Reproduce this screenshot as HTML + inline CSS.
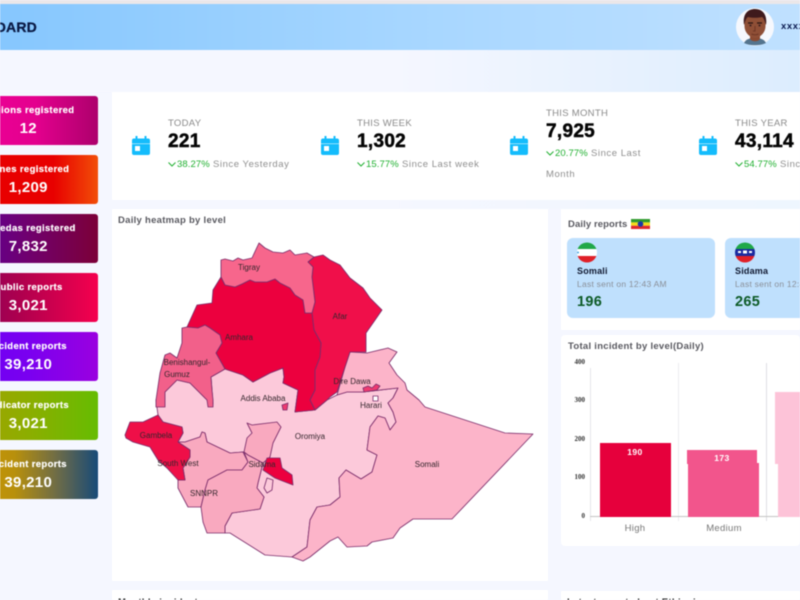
<!DOCTYPE html>
<html><head><meta charset="utf-8"><style>
html,body{margin:0;padding:0;width:800px;height:600px;overflow:hidden;background:#f5f7ff}
#r{position:absolute;left:0;top:0;width:800px;height:600px;overflow:hidden;font-family:"Liberation Sans",sans-serif;filter:blur(.45px)}
.a{position:absolute;white-space:nowrap}
.s{position:absolute;left:-41px;width:138.5px;height:49px;border-radius:3px;color:#fff;text-align:center}
.s b{position:absolute;left:0;right:0;top:9px;font-size:9.5px;line-height:12px;letter-spacing:.35px;-webkit-text-stroke:.2px #fff}
.s i{position:absolute;left:0;right:0;top:24px;font-style:normal;font-weight:bold;font-size:15px;line-height:18px;letter-spacing:.3px}
.l{font-size:9.5px;color:#8a8a8a;letter-spacing:.3px;line-height:12px}
.v{font-size:19px;font-weight:bold;color:#050505;line-height:22px;letter-spacing:.3px;-webkit-text-stroke:.5px #050505}
.c{font-size:9.5px;line-height:12px;color:#8f8f8f;letter-spacing:.55px}
.c em{font-style:normal;color:#20b030;letter-spacing:.1px}
.c svg{vertical-align:0;margin-right:1px}
.t{font-size:9.5px;font-weight:bold;color:#58585f;letter-spacing:.28px;line-height:12px}
.d{position:absolute;top:238px;height:80px;background:#bfe0fd;border-radius:6px}
.n{font-size:9px;font-weight:bold;color:#101830;line-height:12px;letter-spacing:.2px}
.m{font-size:8.5px;color:#8a8f98;line-height:11px;letter-spacing:.25px}
.q{font-size:14.5px;font-weight:bold;color:#0c5a26;line-height:16px;letter-spacing:.3px}
.y{font-family:"Liberation Serif",serif;font-size:7px;color:#333;font-weight:bold;line-height:8px;text-align:right;width:20px}
.x{font-size:9.5px;color:#777;line-height:12px;letter-spacing:.3px}
svg text{font-family:"Liberation Sans",sans-serif;font-size:8px;fill:#33262c;text-anchor:middle}
</style></head><body><div id="r">
<div class="a" style="left:0;top:50px;width:800px;height:42px;background:linear-gradient(90deg,#f5f7ff 0,#f5f7ff 50%,#dcedfe 100%)"></div>
<div class="a" style="left:400px;top:200px;width:400px;height:9px;background:linear-gradient(90deg,#f5f7ff 0,#eef6fe 100%)"></div>
<div class="a" style="left:0;top:0;width:800px;height:4px;background:#ebe7e9"></div>
<div class="a" style="left:0;top:4px;width:800px;height:46px;background:linear-gradient(90deg,#86c7fe 0,#a6d6ff 50%,#c0e1ff 100%)"></div>
<div class="a" style="right:763px;top:18px;font-size:14px;font-weight:bold;color:#0a1a45;line-height:18px;letter-spacing:.2px;-webkit-text-stroke:.3px #0a1a45">DASHBOARD</div>
<svg class="a" style="left:735px;top:8px" width="40" height="40" viewBox="0 0 40 40">
<circle cx="20" cy="19" r="19" fill="#f6f8fd"/>
<path d="M9 35c2-4 6-5 11-5s9 1 11 5c-6 3-16 3-22 0z" fill="#54748e"/>
<path d="M15 26h10v5c-2 3-8 3-10 0z" fill="#8a4a32"/>
<path d="M9.500 13C9.500 6 13 2 20 2s10.500 4 10.500 11v5c0 7-6 12-10.500 12S9.500 25 9.500 18z" fill="#8f4f36"/>
<path d="M9 17C7.500 7 12 1 20 1s12.500 6 11 16c-1-3-2-7-4-8-5 1-9 1-14 0-2 1-3 5-4 8z" fill="#3f1a1c"/>
<path d="M13 15h5M22 15h5" stroke="#2a1512" stroke-width="1.300"/>
<circle cx="15.500" cy="17.500" r="1" fill="#3a1e20"/><circle cx="24.500" cy="17.500" r="1" fill="#3a1e20"/>
<path d="M20 18v5h-2M16.500 26c2 1 5 1 7 0" stroke="#6d3524" stroke-width="1" fill="none"/>
</svg>
<div class="a" style="left:781px;top:21px;font-size:9.500px;font-weight:bold;color:#0a1a50;line-height:12px;letter-spacing:.6px">xxxx</div>

<div class="s" style="top:96px;background:linear-gradient(90deg,#f0009a 0,#e4008e 55%,#ad006c 100%)"><b>Regions registered</b><i>12</i></div>
<div class="s" style="top:155px;background:linear-gradient(90deg,#e80000 0,#e80000 68%,#f24e08 100%)"><b>Zones registered</b><i>1,209</i></div>
<div class="s" style="top:214px;background:linear-gradient(90deg,#5a00a0 0,#70006e 50%,#7c0038 100%)"><b>Woredas registered</b><i>7,832</i></div>
<div class="s" style="top:273px;background:linear-gradient(90deg,#80005a 0,#b0004e 45%,#f5004e 100%)"><b>Public reports</b><i>3,021</i></div>
<div class="s" style="top:332px;background:linear-gradient(90deg,#6a00f5 0,#7a00f0 50%,#9a00e0 100%)"><b>Incident reports</b><i>39,210</i></div>
<div class="s" style="top:391px;background:linear-gradient(90deg,#a8a000 0,#8cae00 50%,#66bc02 100%)"><b>Indicator reports</b><i>3,021</i></div>
<div class="s" style="top:450px;background:linear-gradient(90deg,#d09a00 0,#b8900c 40%,#6a6a4a 72%,#174a78 100%)"><b>Incident reports</b><i>39,210</i></div>

<div class="a" style="left:112px;top:92px;width:688px;height:108px;background:#fff"></div>
<svg width="0" height="0" style="position:absolute"><defs>
<symbol id="cal" viewBox="0 0 18 20"><path d="M0 5.500a2 2 0 0 1 2-2h1.500V1h2v2.500h7V1h2v2.500H16a2 2 0 0 1 2 2V8.500H0z" fill="#14bcfc"/><path d="M0 9h18v9a2 2 0 0 1-2 2H2a2 2 0 0 1-2-2z" fill="#14bcfc"/><rect x="3" y="11" width="5" height="5" fill="#fff"/></symbol>
<symbol id="ck" viewBox="0 0 8 5"><path d="M.5.500 4 4 7.500.500" stroke="#20b030" stroke-width="1" fill="none"/></symbol>
</defs></svg>
<svg class="a" style="left:132px;top:135px" width="18" height="20"><use href="#cal"/></svg>
<svg class="a" style="left:321px;top:135px" width="18" height="20"><use href="#cal"/></svg>
<svg class="a" style="left:510px;top:135px" width="18" height="20"><use href="#cal"/></svg>
<svg class="a" style="left:699px;top:135px" width="18" height="20"><use href="#cal"/></svg>

<div class="a l" style="left:168px;top:118px">TODAY</div>
<div class="a v" style="left:168px;top:131px">221</div>
<div class="a c" style="left:168px;top:159px"><svg width="8" height="5"><use href="#ck"/></svg><em>38.27%</em> Since Yesterday</div>
<div class="a l" style="left:357px;top:118px">THIS WEEK</div>
<div class="a v" style="left:357px;top:131px">1,302</div>
<div class="a c" style="left:357px;top:159px"><svg width="8" height="5"><use href="#ck"/></svg><em>15.77%</em> Since Last week</div>
<div class="a l" style="left:546px;top:108px">THIS MONTH</div>
<div class="a v" style="left:546px;top:121px">7,925</div>
<div class="a c" style="left:546px;top:148px"><svg width="8" height="5"><use href="#ck"/></svg><em>20.77%</em> Since Last</div>
<div class="a c" style="left:546px;top:169px">Month</div>
<div class="a l" style="left:735px;top:118px">THIS YEAR</div>
<div class="a v" style="left:735px;top:131px">43,114</div>
<div class="a c" style="left:735px;top:159px"><svg width="8" height="5"><use href="#ck"/></svg><em>54.77%</em> Since Last year</div>

<div class="a" style="left:112px;top:209px;width:436px;height:372px;background:#fff"></div>
<div class="a t" style="left:118px;top:215px">Daily heatmap by level</div>
<svg class="a" style="left:0;top:0" width="800" height="600" stroke="#7b2d6b" stroke-width=".85" stroke-linejoin="round">
<!-- Oromiya -->
<path fill="#fcc9da" d="M156 400 165 392 177 380 190 383 200 393 207 400 213 404 211 377 225 369 243 375 253 382 270 373 283 368 284 377 283 383 298 390 295 412 305 411 315 410 327 400 337 395 347 392 363 392 398 388 393 398 388 403 393 412 396 422 390 430 385 418 378 416 370 427 367 450 377 455 372 472 361 479 346 470 339 478 340 497 330 505 317 507 310 520 307 547 292 557 265 555 230 533 225 533 225 526 232 513 260 509 264 497 257 488 258 483 263 463 248 455 244 452 230 453 207 442 205 433 202 432 200 437 185 442 178 442 183 433 182 427 163 422 158 415z"/>
<!-- Somali -->
<path fill="#fcb4c9" d="M350 352 367 353 388 348 397 352 389 363 397 375 405 383 407 390 419 400 425 407 505 433 533 434 452 519 413 519 400 528 393 538 372 542 367 546 347 547 338 537 330 541 310 557 303 561 292 557 307 547 310 520 317 507 330 505 340 497 339 478 346 470 361 479 372 472 377 455 367 450 370 427 378 416 385 418 390 430 396 422 393 412 388 403 393 398 398 388 363 392 347 392 337 395 345 367z"/>
<!-- Afar -->
<path fill="#f00f4a" d="M308 262 314 257 323 255 330 260 340 265 350 278 363 288 370 298 382 310 373 323 366 333 366 352 350 352 345 367 337 392 330 397 327 400 315 410 310 400 315 390 315 370 320 357 321 343 314 330 312 313 315 302 312 277 313 267z"/>
<!-- Amhara -->
<path fill="#ec003e" d="M221 277 225 285 235 287 242 284 250 280 255 282 267 282 275 279 280 283 290 288 295 295 303 300 305 313 312 313 314 330 321 343 320 357 315 370 315 390 310 400 315 410 305 411 295 412 298 390 283 383 284 377 283 368 270 373 253 382 243 375 225 369 216 353 222 343 220 335 210 328 205 325 198 328 187 327 197 305 212 303 213 290z"/>
<!-- Tigray -->
<path fill="#f7668c" d="M221 260 225 259 233 261 238 258 243 260 252 258 259 243 265 248 273 252 283 253 290 250 295 255 307 253 314 257 308 262 313 267 312 277 315 302 312 313 305 313 303 300 295 295 290 288 280 283 275 279 267 282 255 282 250 280 242 284 235 287 225 285 221 277z"/>
<!-- Benishangul -->
<path fill="#f2608a" d="M187 327 198 328 205 325 210 328 220 335 222 343 216 353 225 369 211 377 212 390 213 400 213 407 208 407 207 400 200 393 190 383 177 380 165 392 165 407 156 407 156 400 160 373 165 355 170 353 177 358 182 343 182 328z"/>
<!-- South West -->
<path fill="#f9a9bf" d="M185 442 200 437 202 432 205 433 207 442 230 453 243 452 248 462 242 470 227 470 208 480 205 490 201 507 188 507 178 488 178 480 185 480 183 468 190 457 190 450 178 442z"/>
<!-- SNNPR -->
<path fill="#f9a9bf" d="M227 470 242 470 248 462 244 452 248 455 263 463 258 483 257 488 264 497 260 509 232 513 225 526 225 533 207 533 203 522 201 507 205 490 208 480z"/>
<!-- Sidama -->
<path fill="#f9a9bf" d="M247 423 252 425 277 422 281 427 278 433 273 443 270 457 263 463 248 455 244 452 247 438 252 433z"/>
<!-- Gambela -->
<path fill="#ef0f48" d="M130 422 143 422 158 415 163 422 182 427 183 433 178 442 190 450 190 457 183 468 185 480 178 480 167 468 158 460 150 447 133 442 126 438 125 435z"/>
<!-- Red south -->
<path fill="#ec003e" d="M267 458 280 458 282 468 292 475 293 485 280 480 275 478 263 470z"/>
<path fill="#fcc9da" d="M267 478 273 480 272 490 267 493 264 488z"/>
<!-- small -->
<path fill="#ee3a70" d="M282 405 288 403 287 410 283 410z"/>
<path fill="#ee3a70" d="M363 388 368 386 372 388 376 384 380 386 377 390 364 392z"/>
<path fill="#fff" d="M373 396h5v5h-5z" stroke-width=".8"/>
<g stroke="none">
<text x="249" y="270">Tigray</text><text x="239" y="340">Amhara</text><text x="340" y="319">Afar</text>
<text x="187" y="365">Benishangul-</text><text x="177" y="377">Gumuz</text><text x="263" y="401">Addis Ababa</text>
<text x="352" y="384">Dire Dawa</text><text x="371" y="408">Harari</text><text x="156" y="438">Gambela</text>
<text x="178" y="466">South West</text><text x="204" y="496">SNNPR</text><text x="262" y="467">Sidama</text>
<text x="310" y="439">Oromiya</text><text x="427" y="467">Somali</text>
</g>
</svg>

<div class="a" style="left:561px;top:209px;width:239px;height:121px;background:#fff"></div>
<div class="a t" style="left:568px;top:219px;letter-spacing:.1px">Daily reports</div>
<svg class="a" style="left:631px;top:219px" width="19" height="10"><rect width="19" height="3.400" fill="#2f9a2c"/><rect y="3.400" width="19" height="3.300" fill="#f2dc1a"/><rect y="6.700" width="19" height="3.300" fill="#e0282c"/><circle cx="9.500" cy="5" r="2.800" fill="#1a3aa8"/></svg>
<div class="d" style="left:567px;width:148px"></div>
<div class="d" style="left:725px;width:90px"></div>
<svg class="a" style="left:577px;top:242px" width="20" height="21"><defs><clipPath id="f"><circle cx="10" cy="10.500" r="10"/></clipPath></defs><g clip-path="url(#f)"><rect width="20" height="7" fill="#20a848"/><rect y="7" width="20" height="7" fill="#fff"/><rect y="14" width="20" height="7" fill="#e02028"/><circle cx="1" cy="10.500" r="1" fill="#4aa8e0"/></g></svg>
<svg class="a" style="left:735px;top:242px" width="20" height="21"><g clip-path="url(#f)"><rect width="20" height="7" fill="#20a848"/><rect y="7" width="20" height="7" fill="#1a2aa0"/><rect x="8" y="8.500" width="4" height="3" fill="#fff"/><rect x="3" y="9" width="3" height="2" fill="#fff"/><rect x="14" y="9" width="3" height="2" fill="#fff"/><rect y="14" width="20" height="7" fill="#e02028"/></g></svg>
<div class="a n" style="left:577px;top:265px">Somali</div>
<div class="a m" style="left:577px;top:279px">Last sent on 12:43 AM</div>
<div class="a q" style="left:577px;top:294px">196</div>
<div class="a n" style="left:735px;top:265px">Sidama</div>
<div class="a m" style="left:735px;top:279px">Last sent on 12:43 AM</div>
<div class="a q" style="left:735px;top:294px">265</div>

<div class="a" style="left:561px;top:335px;width:239px;height:211px;background:#fff;border-radius:4px"></div>
<div class="a t" style="left:568px;top:341px">Total incident by level(Daily)</div>
<div class="a y" style="left:565px;top:358px">400</div>
<div class="a y" style="left:565px;top:396px">300</div>
<div class="a y" style="left:565px;top:435px">200</div>
<div class="a y" style="left:565px;top:473px">100</div>
<div class="a y" style="left:565px;top:512px">0</div>
<div class="a" style="left:590px;top:368px;width:1px;height:153px;background:#e6e6ea"></div>
<div class="a" style="left:678px;top:363px;width:1px;height:158px;background:#ececf0"></div>
<div class="a" style="left:766px;top:363px;width:1px;height:158px;background:#dfdfe3"></div>
<div class="a" style="left:590px;top:516px;width:210px;height:1px;background:#c4c4c4"></div>
<div class="a" style="left:600px;top:443px;width:71px;height:74px;background:#e6003c"></div>
<div class="a" style="left:687px;top:450px;width:70px;height:14px;background:#f2558c"></div>
<div class="a" style="left:688px;top:463px;width:71px;height:54px;background:#f2558c"></div>
<div class="a" style="left:775px;top:392px;width:25px;height:72px;background:#fdc3d8"></div>
<div class="a" style="left:778px;top:463px;width:22px;height:54px;background:#fdc3d8"></div>
<div class="a" style="left:600px;top:447px;width:70px;text-align:center;font-size:8.500px;font-weight:bold;color:#fff;line-height:11px;letter-spacing:.4px">190</div>
<div class="a" style="left:687px;top:453px;width:70px;text-align:center;font-size:8.500px;font-weight:bold;color:#fff;line-height:11px;letter-spacing:.4px">173</div>
<div class="a x" style="left:600px;top:523px;width:70px;text-align:center">High</div>
<div class="a x" style="left:689px;top:523px;width:70px;text-align:center">Medium</div>

<div class="a" style="left:112px;top:590px;width:436px;height:10px;background:#fff"></div>
<div class="a" style="left:561px;top:591px;width:239px;height:9px;background:#fff"></div>
<div class="a t" style="left:118px;top:597px;color:#222">Monthly incident</div>
<div class="a t" style="left:567px;top:597px;color:#222">Latest report about Ethiopia</div>
</div></body></html>
